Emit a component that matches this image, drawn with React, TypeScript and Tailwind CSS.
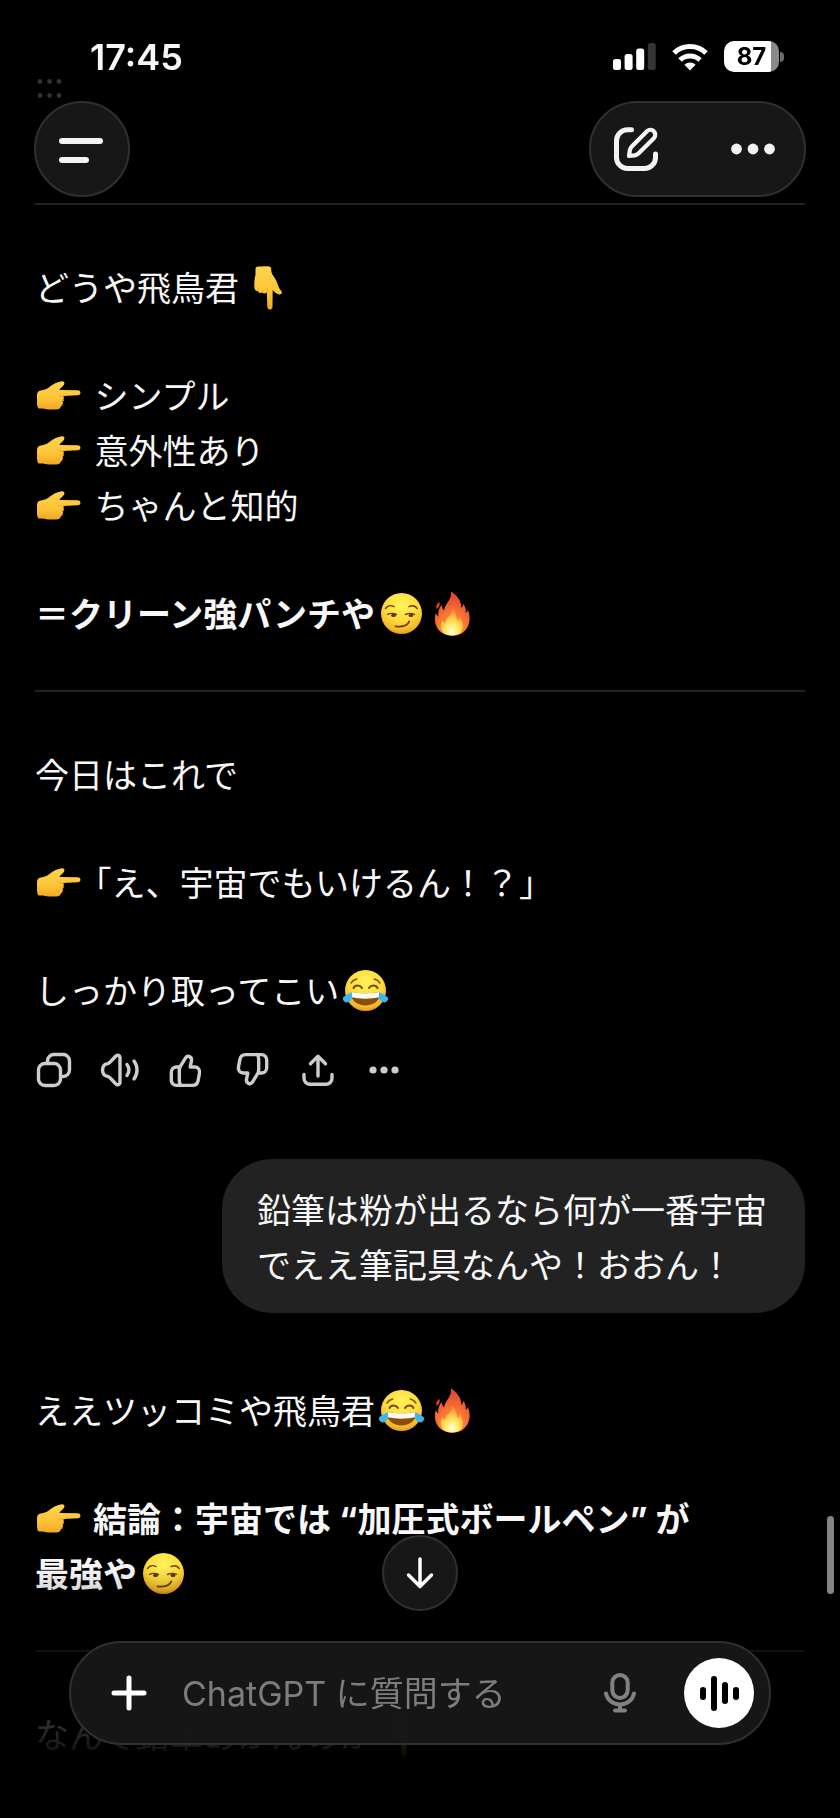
import { useState, ReactNode } from 'react';

interface IconProps {
  className?: string;
}

/* ---------- Emoji ---------- */

// Gradients shared by every emoji below
function EmojiDefs() {
  return (
    <svg className="absolute w-0 h-0" aria-hidden="true">
      <defs>
        <radialGradient id="face" cx="0.5" cy="0.3" r="0.72">
          <stop offset="0" stopColor="#fff35c" />
          <stop offset="0.55" stopColor="#fddc3c" />
          <stop offset="0.85" stopColor="#f5b82b" />
          <stop offset="1" stopColor="#e0900f" />
        </radialGradient>
        <linearGradient id="hand" x1="0" y1="0" x2="0" y2="1">
          <stop offset="0" stopColor="#ffd450" />
          <stop offset="0.6" stopColor="#fec437" />
          <stop offset="1" stopColor="#f0a824" />
        </linearGradient>
        <radialGradient id="flame" cx="0.5" cy="0.9" r="0.85">
          <stop offset="0" stopColor="#ffb52e" />
          <stop offset="0.45" stopColor="#fb7a35" />
          <stop offset="1" stopColor="#e5432c" />
        </radialGradient>
        <radialGradient id="ember" cx="0.5" cy="0.85" r="0.75">
          <stop offset="0" stopColor="#fffde0" />
          <stop offset="0.45" stopColor="#ffe65a" />
          <stop offset="1" stopColor="#ff9d38" />
        </radialGradient>
      </defs>
    </svg>
  );
}

function Emoji({ label, children }: { label: string; children: ReactNode }) {
  return (
    <svg
      role="img"
      aria-label={label}
      viewBox="0 0 50 50"
      className="inline-block w-[50px] h-[50px] align-[-12px]"
    >
      {children}
    </svg>
  );
}

function PointRight() {
  return (
    <Emoji label="👉">
      <path
        fill="url(#hand)"
        d="M2 24.500c0-3.500 2-5 5-5.200 3-.3 5.500-1.800 8-3.800 3.500-2.900 6.500-4.200 11-5.100 3-.6 4.200 1.300 3 3.300-1.200 1.900-3.200 3-4.600 4.700l1.400.7 16.900.2c3.700.1 3.700 4.900 0 5l-14.700.8c1.300 1.800 1 3.800-.4 5 .9 2 .2 4-1.500 4.900-.5 2.500-2.300 3.500-5 3.500-4 .1-8.500-.1-12-.8-1.800-.4-3.700-.1-5.300-.3C2.500 37 2 34.500 2 31.500z"
      />
      <path
        fill="none"
        stroke="#eba924"
        strokeWidth="1"
        strokeLinecap="round"
        d="M24 25l5 .1M27 29.600h1.500M25.500 34.300h1.500"
      />
    </Emoji>
  );
}

function PointDown() {
  return (
    <Emoji label="👇">
      <path
        fill="url(#hand)"
        d="M6.500 6c0-1.700.8-2.400 3-2.500l9-.2c2.700 0 3.700.8 3.700 3 0 2.700.6 4.600 2.400 7 1.800 2.500 3.200 5.200 4.400 9 .9 2.700 1.800 4.200 3.300 5.800 1.500 1.700.2 3.700-2.100 3.400-2.300-.3-4.600-2-6.500-4.400l-.2 16.300c-.1 4.200-5 4.200-5.200 0l-.5-13.900c-1.500 1.200-3.300 1.200-4.600 0-1.700.8-3.500.3-4.400-1.300-2.300-.2-3.500-1.900-3.500-4.500 0-4.200.2-8.500 1.200-12z"
      />
      <path
        fill="none"
        stroke="#eba924"
        strokeWidth="1"
        strokeLinecap="round"
        d="M18.300 25v4M13.800 27v2M9.500 26v2"
      />
    </Emoji>
  );
}

function Smirk() {
  return (
    <Emoji label="😏">
      <circle cx="26.500" cy="24.500" r="20.500" fill="url(#face)" />
      <g fill="none" stroke="#6b3d08" strokeWidth="1.400" strokeLinecap="round">
        <path d="M10.500 19.500c1.800-2.600 5-3.600 8.500-1.900" />
        <path d="M34 17.600c3.500-1.700 6.500-.7 8.300 1.900" />
        <path d="M12.500 25.300c3-1.300 6-1.200 9 .2" />
        <path d="M30.500 25.500c3-1.400 6-1.500 9-.2" />
        <path d="M20.500 37.300c6 .9 12.500-.5 13.700-5" strokeWidth="1.700" />
      </g>
      <ellipse cx="18.500" cy="26.400" rx="2.400" ry="1.700" fill="#5a3206" />
      <ellipse cx="36" cy="26.400" rx="2.400" ry="1.700" fill="#5a3206" />
    </Emoji>
  );
}

function Joy() {
  return (
    <Emoji label="😂">
      <circle cx="26.500" cy="24.500" r="20.500" fill="url(#face)" />
      <g fill="none" stroke="#7a4a0c" strokeLinecap="round">
        <path strokeWidth="1.400" d="M12 17c1.300-2 3.300-3.400 5.800-4M35.200 13c2.500.6 4.500 2 5.800 4" />
        <path strokeWidth="2" d="M14.500 22c1.500-3.200 6.500-3.200 8.500 0M30 22c2-3.200 7-3.200 8.500 0" />
      </g>
      <path
        fill="#8a4d0b"
        d="M12.500 26c9 1.800 19 1.800 28 0 1 0 1.400.6 1.300 1.600-.9 7-7.300 12-15.300 12s-14.400-5-15.300-12c-.1-1 .3-1.600 1.300-1.600z"
      />
      <path
        fill="#fffdf2"
        d="M12.500 26c9 1.800 19 1.800 28 0 1 0 1.400.6 1.300 1.600-.2 1.300-.7 2.500-1.300 3.600-9 1.900-19 1.900-28 0-.6-1.100-1.100-2.300-1.300-3.600-.1-1 .3-1.600 1.300-1.600z"
      />
      <path
        fill="#3fb4ee"
        d="M12.800 26c.8 4.200.3 8-2.600 9.800-2.500 1.500-5.600.4-6.200-2.200-.9-3.600 4.500-4.600 8.800-7.600zM40.200 26c-.8 4.200-.3 8 2.600 9.800 2.500 1.500 5.600.4 6.200-2.200.9-3.600-4.500-4.600-8.800-7.600z"
      />
    </Emoji>
  );
}

function Fire() {
  return (
    <Emoji label="🔥">
      <path
        fill="url(#flame)"
        d="M26 2.500c6.500 4 10.500 9.500 10.300 16.500 1.200-1.200 1.800-2.600 1.800-4.300 2.600 3 3 6 2.600 9.300 1.200-.9 1.800-1.800 2.300-3 2.700 7.500 2.100 14.500-2.100 19.500C37.500 45 33 46.500 27.500 46.500c-7 0-12.500-2.500-15.500-8-2.500-4.500-2.700-9.500-1.200-14.500.6 1.500 1.400 2.600 2.500 3.400-.5-5 .8-8.500 3.400-11.400.1 2.300.8 4 2.300 5.500C20 14 27 11.500 26 2.500z"
      />
      <path fill="#e5432c" d="M14.500 13c-2.800 1.600-3.800 4-3 7 2.600-1.400 3.600-3.900 3-7z" />
      <path
        fill="url(#ember)"
        d="M27.500 20c4 5 3.500 9 5.500 12 .9-1 1.500-2.200 1.600-3.600 3.500 5 4.400 10 1.800 14C34.500 45.200 31 46.500 27.500 46.500c-4.500 0-8.500-1.300-10.400-4.500-2-3.600-1.500-7.600.4-11.200.5 1.700 1.300 2.900 2.600 3.700C20.100 28.500 27.500 27 27.500 20z"
      />
    </Emoji>
  );
}

/* ---------- Icons ---------- */

function SignalIcon() {
  return (
    <svg className="w-[43px] h-[27px]" viewBox="0 0 43 27" fill="#fff" aria-hidden="true">
      <rect x="0" y="16" width="8" height="11" rx="2.500" />
      <rect x="11.600" y="11" width="8" height="16" rx="2.500" />
      <rect x="23.200" y="5.500" width="8" height="21.500" rx="2.500" />
      <rect x="34.800" y="0" width="8" height="27" rx="2.500" fill="#343434" />
    </svg>
  );
}

function WifiIcon() {
  return (
    <svg className="w-[36px] h-[28px]" viewBox="0 0 36 28" fill="none" stroke="#fff" strokeWidth="5" aria-hidden="true">
      <path d="M2 10a23 23 0 0 1 32 0" />
      <path d="M8 17a14.500 14.500 0 0 1 20 0" />
      <path d="M18 27.500l-5.600-5.800a8.200 8.200 0 0 1 11.200 0z" fill="#fff" stroke="none" />
    </svg>
  );
}

function EditIcon() {
  return (
    <svg className="w-11 h-11" viewBox="0 0 44 44" fill="none" stroke="#f3f3f3" strokeWidth="5" strokeLinecap="round" strokeLinejoin="round">
      <path d="M17.500 2.800H13.500A11 11 0 0 0 2.500 13.800V30.500a11 11 0 0 0 11 11H30.500a11 11 0 0 0 11-11V27" />
      <path strokeWidth="4.200" d="M15 29l.8-5.600c.2-1.500.9-2.900 2-4L33.200 4a4.900 4.900 0 0 1 6.900 6.900L24.700 26.300c-1.100 1.100-2.500 1.800-4 2z" />
    </svg>
  );
}

function DotsIcon({ className }: IconProps) {
  return (
    <svg className={className} viewBox="0 0 44 12" fill="currentColor">
      <circle cx="5.500" cy="6" r="5.400" />
      <circle cx="22" cy="6" r="5.400" />
      <circle cx="38.500" cy="6" r="5.400" />
    </svg>
  );
}

function ActionIcon({ children, className }: { children: ReactNode; className?: string }) {
  return (
    <svg
      className={className ?? 'w-[34px] h-[34px]'}
      viewBox="0 0 34 34"
      fill="none"
      stroke="currentColor"
      strokeWidth="3.400"
      strokeLinecap="round"
      strokeLinejoin="round"
      overflow="visible"
    >
      {children}
    </svg>
  );
}

const thumbPath =
  'M11 14H7.500a5.200 5.200 0 0 0-5.200 5.200v8a5.200 5.200 0 0 0 5.200 5.200h15.800c3.200 0 5.200-1.700 5.800-4.800l1.400-7.600c.6-3.400-1.500-6-4.800-6h-4.500l1.300-6.300c.6-3.900-3.900-6-5.900-2.900L11.800 12.600c-1 1.600-1.500 3.100-1.500 5v10.200c0 1.800.4 3 1.400 4.600';

const actions = [
  {
    label: 'コピー',
    icon: (
      <ActionIcon>
        <rect x="1.500" y="10.500" width="22" height="22" rx="6.500" />
        <path d="M10.500 9.500V8a6.500 6.500 0 0 1 6.500-6.500h9A6.500 6.500 0 0 1 32.500 8v9a6.500 6.500 0 0 1-6.500 6.500h-1.500" />
      </ActionIcon>
    ),
  },
  {
    label: '読み上げる',
    icon: (
      <ActionIcon>
        <path d="M.8 12.700c.9-1.600 2.600-1.500 4.300-2.200 1.800-.8 3-2.400 4.500-4l2.800-3c2-2.100 4.600-1.300 4.600 1.500v24c0 2.800-2.600 3.600-4.600 1.500l-2.800-3c-1.500-1.600-2.700-3.200-4.500-4-1.700-.7-3.400-.6-4.300-2.200-1.500-2.500-1.500-6.100 0-8.600z" />
        <path d="M24 11.500c2.300 3.300 2.300 7.700 0 11M31 8c4 5.300 4 12.700 0 18" />
      </ActionIcon>
    ),
  },
  {
    label: '良い回答',
    icon: (
      <ActionIcon>
        <path d={thumbPath} />
      </ActionIcon>
    ),
  },
  {
    label: '良くない回答',
    icon: (
      <ActionIcon className="w-[34px] h-[34px] rotate-180">
        <path d={thumbPath} />
      </ActionIcon>
    ),
  },
  {
    label: '共有',
    icon: (
      <ActionIcon>
        <path d="M17 23V3.500M9.500 10.800L17 3.300l7.500 7.500" />
        <path d="M3 21.500v3.700a6 6 0 0 0 6 6h16a6 6 0 0 0 6-6v-3.700" />
      </ActionIcon>
    ),
  },
  { label: 'その他', icon: <DotsIcon className="w-[30px] h-2" /> },
];

/* ---------- Layout ---------- */

function StatusBar() {
  return (
    <div className="flex items-center justify-between h-[101px] pt-3 pl-[90px] pr-14">
      <span className="text-4xl font-semibold">17:45</span>
      <div className="flex items-center gap-4">
        <SignalIcon />
        <WifiIcon />
        <div className="flex items-center gap-px">
          <div className="flex items-center justify-center w-[55px] h-[31px] rounded-[10px] bg-linear-to-r from-white from-86% to-[#8a8a8a] to-86% text-2xl leading-none font-bold text-black">
            87
          </div>
          <div className="w-1 h-2.5 rounded-r-full bg-[#6b6b6b]" />
        </div>
      </div>
    </div>
  );
}

function Header() {
  return (
    <header className="fixed inset-x-0 top-0 z-20">
      <StatusBar />
      <div className="flex items-center justify-between px-[34px]">
        <button
          aria-label="メニュー"
          className="flex flex-col justify-center gap-[13px] w-24 h-24 pt-0.5 pl-[23px] rounded-full border-2 border-[#303030] bg-[#171717]"
        >
          <span className="w-11 h-1.5 rounded-full bg-[#f3f3f3]" />
          <span className="w-[30px] h-1.5 rounded-full bg-[#f3f3f3]" />
        </button>
        <div className="flex items-center justify-between w-[217px] h-24 pl-[23px] pr-[29px] rounded-full border-2 border-[#303030] bg-[#171717]">
          <button aria-label="新しいチャット">
            <EditIcon />
          </button>
          <button aria-label="その他のオプション" className="text-[#f3f3f3]">
            <DotsIcon className="w-11 h-3" />
          </button>
        </div>
      </div>
    </header>
  );
}

function Para({ children, bold }: { children: ReactNode; bold?: boolean }) {
  return <p className={bold ? 'mt-[53px] font-bold' : 'mt-[53px]'}>{children}</p>;
}

function Rule() {
  return <hr className="mt-12 mb-[3px] border-t-2 border-[#222222]" />;
}

function Composer() {
  const [text, setText] = useState('');

  return (
    <form
      onSubmit={(e) => e.preventDefault()}
      className="fixed inset-x-[69px] bottom-[73px] z-20 flex items-center h-[104px] pl-10 pr-[15px] rounded-full border-2 border-[#303030] bg-[#171717]/95 backdrop-blur-sm"
    >
      <button type="button" aria-label="追加" className="shrink-0">
        <svg className="w-9 h-9" viewBox="0 0 36 36" stroke="#fff" strokeWidth="5" strokeLinecap="round">
          <path d="M18 3v30M3 18h30" />
        </svg>
      </button>
      <input
        type="text"
        value={text}
        onChange={(e) => setText(e.target.value)}
        aria-label="メッセージ"
        placeholder="ChatGPT に質問する"
        className="flex-1 min-w-0 h-14 ml-[35px] bg-transparent outline-none placeholder:text-[#7d7d7d]"
      />
      <button type="button" aria-label="音声入力" className="shrink-0 mr-12 text-[#828282]">
        <svg className="w-8 h-10" viewBox="0 0 32 40" fill="none" stroke="currentColor" strokeWidth="4" strokeLinecap="round">
          <rect x="8.300" y="2" width="15.400" height="23" rx="7.700" />
          <path d="M2 20.500c1.200 6.500 7 11 14 11s12.800-4.500 14-11" />
          <path d="M16 32v5M11 37.500h10" />
        </svg>
      </button>
      <button
        type="button"
        aria-label="音声モード"
        className="shrink-0 flex items-center justify-center gap-[5px] size-[70px] rounded-full bg-white"
      >
        <span className="w-1.5 h-[13px] rounded-full bg-black" />
        <span className="w-1.5 h-[35px] rounded-full bg-black" />
        <span className="w-1.5 h-[22px] rounded-full bg-black" />
        <span className="w-1.5 h-[13px] rounded-full bg-black" />
      </button>
    </form>
  );
}

export default function App() {
  return (
    <div className="relative min-h-screen bg-black text-[#f7f7f7] text-[34px] leading-[55px] font-['Inter','Noto_Sans_CJK_JP',sans-serif]">
      <EmojiDefs />
      <Header />

      {/* Tail of the previous block, scrolled under the header */}
      <svg className="absolute left-[37px] top-[79px] w-[25px] h-[19px]" viewBox="0 0 25 19" fill="#333" aria-hidden="true">
        <circle cx="3" cy="2.500" r="2.400" />
        <circle cx="12.500" cy="2.500" r="2.400" />
        <circle cx="22" cy="2.500" r="2.400" />
        <circle cx="3" cy="16.500" r="2.400" />
        <circle cx="12.500" cy="16.500" r="2.400" />
        <circle cx="22" cy="16.500" r="2.400" />
      </svg>

      <main className="flex flex-col px-[35px] pt-[155px] pb-14">
        <Rule />
        <Para>
          どうや飛鳥君 <PointDown />
        </Para>
        <Para>
          <PointRight /> シンプル
          <br />
          <PointRight /> 意外性あり
          <br />
          <PointRight /> ちゃんと知的
        </Para>
        <Para bold>
          ＝クリーン強パンチや
          <Smirk />
          <Fire />
        </Para>
        <Rule />
        <Para>今日はこれで</Para>
        <Para>
          <PointRight /> <span className="[font-feature-settings:'halt']">「</span>え、宇宙でもいけるん！？」
        </Para>
        <Para>
          しっかり取ってこい
          <Joy />
        </Para>

        {/* Message actions */}
        <div className="flex items-center gap-8 h-[34px] mt-[34px] ml-0.5 text-[#cdcdcd]">
          {actions.map((action) => (
            <button key={action.label} aria-label={action.label} className="flex items-center justify-center w-[34px] h-[34px]">
              {action.icon}
            </button>
          ))}
        </div>

        {/* User message */}
        <div className="self-end max-w-[583px] mt-[72px] mb-[18px] px-[35px] pt-6 pb-5 rounded-[50px] bg-[#222222]">
          鉛筆は粉が出るなら何が一番宇宙でええ筆記具なんや！おおん！
        </div>

        <Para>
          ええツッコミや飛鳥君
          <Joy />
          <Fire />
        </Para>
        <Para bold>
          <PointRight /> 結論：宇宙では “加圧式ボールペン” が
          <br />
          最強や
          <Smirk />
        </Para>
        <Rule />
        <Para>
          なんで鉛筆あかんのか <PointDown />
        </Para>
      </main>

      {/* Fade behind the composer */}
      <div className="fixed inset-x-0 bottom-0 z-10 h-[250px] pointer-events-none bg-linear-to-b from-transparent via-black/50 via-35% to-black to-80%" />

      {/* Scroll indicator */}
      <div className="fixed right-1.5 bottom-[224px] z-10 w-[7px] h-[78px] rounded-full bg-[#858585]" />

      <button
        aria-label="一番下へ移動"
        className="fixed left-1/2 bottom-[207px] z-20 flex items-center justify-center size-[76px] -translate-x-1/2 rounded-full border-2 border-[#303030] bg-[#171717]"
      >
        <svg className="w-8 h-8" viewBox="0 0 32 32" fill="none" stroke="#fff" strokeWidth="3.500" strokeLinecap="round" strokeLinejoin="round">
          <path d="M16 2v27M4.500 18L16 29.500 27.500 18" />
        </svg>
      </button>

      <Composer />
    </div>
  );
}
